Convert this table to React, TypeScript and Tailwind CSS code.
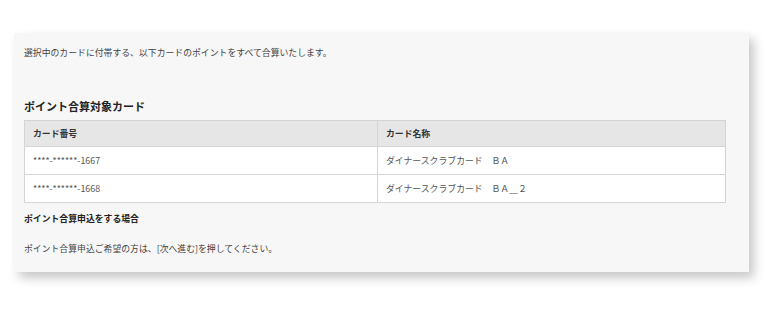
import React from "react"

interface CardRow {
  number: string
  name: string
}

const cards: CardRow[] = [
  { number: "****-******-1667", name: "ダイナースクラブカード　ＢＡ" },
  { number: "****-******-1668", name: "ダイナースクラブカード　ＢＡ＿２" },
]

const font = { fontFamily: '"Noto Sans CJK JP", "Noto Sans", sans-serif' }

const App: React.FC = () => {
  return (
    <div className="w-[768px] h-[310px] bg-white pt-[33px] pl-[14px]" style={font}>
      <div className="w-[735px] h-[239px] bg-[#f7f7f7] shadow-[5px_6px_10px_rgba(0,0,0,0.22)] px-[10px] pt-[14px] text-[#444]">
        <p className="text-[8.85px] leading-[12px]">
          選択中のカードに付帯する、以下カードのポイントをすべて合算いたします。
        </p>

        <h2 className="mt-[40px] text-[11px] leading-[14px] font-bold text-[#222]">
          ポイント合算対象カード
        </h2>

        <table className="mt-[7px] w-[702px] border-collapse border border-[#d4d4d4] text-[8.85px]">
          <thead>
            <tr className="h-[26px] bg-[#e6e6e6]">
              <th className="w-[353px] border border-[#d4d4d4] pl-[8px] text-left font-bold text-[#333]">
                カード番号
              </th>
              <th className="border border-[#d4d4d4] pl-[8px] text-left font-bold text-[#333]">
                カード名称
              </th>
            </tr>
          </thead>
          <tbody>
            {cards.map((card) => (
              <tr key={card.number} className="h-[28px] bg-white">
                <td className="border border-[#d4d4d4] pl-[8px] text-[#555]">{card.number}</td>
                <td className="border border-[#d4d4d4] pl-[8px] text-[#555]">{card.name}</td>
              </tr>
            ))}
          </tbody>
        </table>

        <h3 className="mt-[10px] text-[8.85px] leading-[12px] font-bold text-[#222]">
          ポイント合算申込をする場合
        </h3>

        <p className="mt-[18px] text-[8.85px] leading-[12px]">
          ポイント合算申込ご希望の方は、[次へ進む]を押してください。
        </p>
      </div>
    </div>
  )
}

export default App
